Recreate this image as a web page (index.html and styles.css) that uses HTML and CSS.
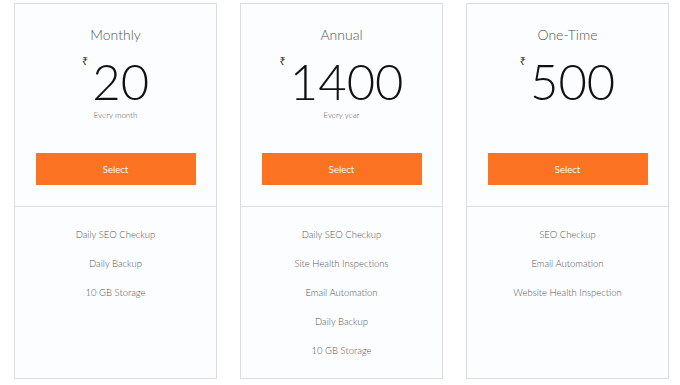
FILE: index.html
```html
<!DOCTYPE html>
<html>
<head>
<meta charset="utf-8">
<link rel="stylesheet" href="styles.css">
</head>
<body>
<div class="plans">
  <div class="card">
    <div class="head">
      <div class="title">Monthly</div>
      <div class="price"><span class="cur">₹</span><span class="amt">20</span></div>
      <div class="period">Every month</div>
      <div class="btn">Select</div>
    </div>
    <ul class="features">
      <li>Daily SEO Checkup</li>
      <li>Daily Backup</li>
      <li>10 GB Storage</li>
    </ul>
  </div>
  <div class="card">
    <div class="head">
      <div class="title">Annual</div>
      <div class="price"><span class="cur">₹</span><span class="amt">1400</span></div>
      <div class="period">Every year</div>
      <div class="btn">Select</div>
    </div>
    <ul class="features">
      <li>Daily SEO Checkup</li>
      <li>Site Health Inspections</li>
      <li>Email Automation</li>
      <li>Daily Backup</li>
      <li>10 GB Storage</li>
    </ul>
  </div>
  <div class="card">
    <div class="head">
      <div class="title">One-Time</div>
      <div class="price"><span class="cur">₹</span><span class="amt">500</span></div>
      <div class="period">&nbsp;</div>
      <div class="btn">Select</div>
    </div>
    <ul class="features">
      <li>SEO Checkup</li>
      <li>Email Automation</li>
      <li>Website Health Inspection</li>
    </ul>
  </div>
</div>
</body>
</html>
```
FILE: styles.css
```css
html, body {
  margin: 0;
  padding: 0;
  background: #ffffff;
}
body {
  font-family: Lato, "Open Sans", sans-serif;
  color: #333;
}
.plans {
  display: flex;
  gap: 23px;
  padding: 3px 0 0 14px;
}
.card {
  width: 201px;
  height: 374px;
  border: 1px solid #dcdde2;
  background: #fcfdff;
  display: flex;
  flex-direction: column;
}
.head {
  height: 202px;
  border-bottom: 1px solid #dcdde2;
  display: flex;
  flex-direction: column;
  align-items: center;
}
.title {
  margin-top: 22px;
  font-size: 14px;
  font-weight: 300;
  color: #555;
  line-height: 18px;
}
.price {
  display: flex;
  align-items: flex-start;
  margin-top: 8px;
}
.cur {
  font-size: 11px;
  line-height: 12px;
  margin-top: 3px;
  margin-right: 4px;
  color: #222;
  font-family: "Noto Sans", sans-serif;
}
.amt {
  font-size: 49px;
  font-weight: 300;
  line-height: 58px;
  color: #111;
}
.period {
  font-size: 8px;
  font-weight: 300;
  color: #555;
  line-height: 10px;
  margin-top: 0;
}
.btn {
  margin-top: 33px;
  width: 160px;
  height: 32px;
  background: #fc7323;
  color: #fff;
  font-size: 9.5px;
  font-weight: 400;
  display: flex;
  align-items: center;
  justify-content: center;
}
.features {
  list-style: none;
  margin: 0;
  padding: 21px 0 0;
  text-align: center;
}
.features li {
  font-size: 9.5px;
  font-weight: 300;
  line-height: 14px;
  color: #555;
  margin-bottom: 15px;
}
```
